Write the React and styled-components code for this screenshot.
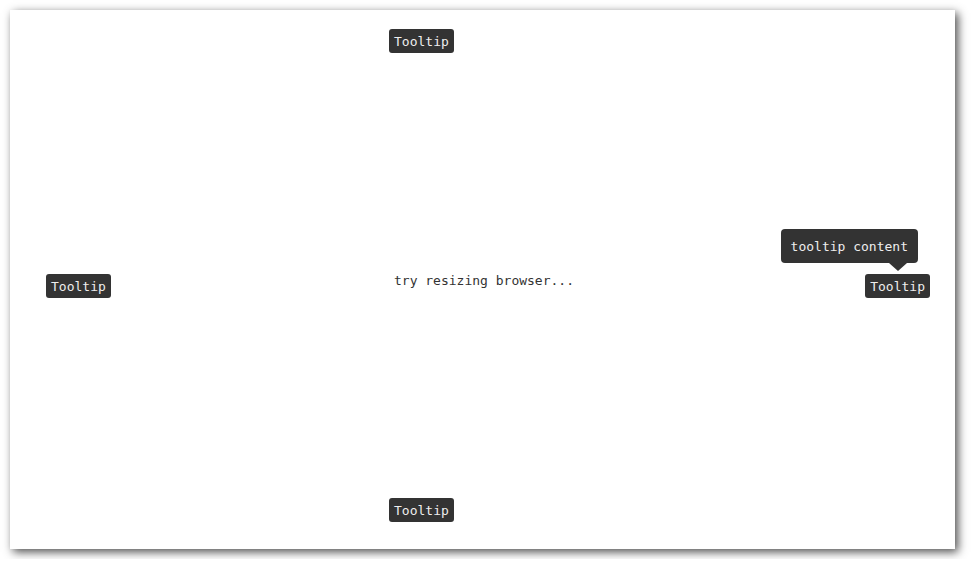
import React from 'react';
import styled, { createGlobalStyle } from 'styled-components';

const Global = createGlobalStyle`
  html, body {
    margin: 0;
    padding: 0;
    background: #fff;
  }
  body {
    font-family: "DejaVu Sans Mono", "Liberation Mono", monospace;
    font-size: 13px;
    color: #333;
  }
`;

const Frame = styled.div`
  box-sizing: border-box;
  width: 945px;
  height: 539px;
  margin: 10px;
  background: #fff;
  box-shadow: 3px 3px 9px rgba(0, 0, 0, 0.7);
  display: flex;
  flex-direction: column;
  padding: 19px 25px 27px 36px;
`;

const Row = styled.div`
  display: flex;
  padding-left: ${p => p.$indent || 0}px;
`;

const Middle = styled.div`
  flex: 1;
  display: flex;
  align-items: center;
  justify-content: space-between;
`;

const Button = styled.div`
  box-sizing: border-box;
  height: 24px;
  padding: 0 5px;
  display: flex;
  align-items: center;
  background: #333;
  color: #eee;
  border-radius: 3px;
  font-size: 13px;
  line-height: 1;
  white-space: nowrap;
  margin-top: ${p => p.$shift || 0}px;
`;

const Hint = styled.div`
  margin-top: 9px;
  margin-right: 8px;
  line-height: 15px;
`;

const Anchor = styled.div`
  position: relative;
  margin-top: 21px;
`;

const Bubble = styled.div`
  position: absolute;
  right: 12px;
  bottom: calc(100% + 11px);
  box-sizing: border-box;
  height: 34px;
  padding: 0 10px;
  display: flex;
  align-items: center;
  background: #333;
  color: #eee;
  border-radius: 4px;
  white-space: nowrap;

  &::after {
    content: '';
    position: absolute;
    top: 100%;
    right: 11px;
    border-left: 9px solid transparent;
    border-right: 9px solid transparent;
    border-top: 8px solid #333;
  }
`;

const App = () => (
  <>
    <Global />
    <Frame>
      <Row $indent={343}>
        <Button>Tooltip</Button>
      </Row>
      <Middle>
        <Button $shift={21}>Tooltip</Button>
        <Hint>try resizing browser...</Hint>
        <Anchor>
          <Bubble>tooltip content</Bubble>
          <Button>Tooltip</Button>
        </Anchor>
      </Middle>
      <Row $indent={343}>
        <Button>Tooltip</Button>
      </Row>
    </Frame>
  </>
);

export default App;
